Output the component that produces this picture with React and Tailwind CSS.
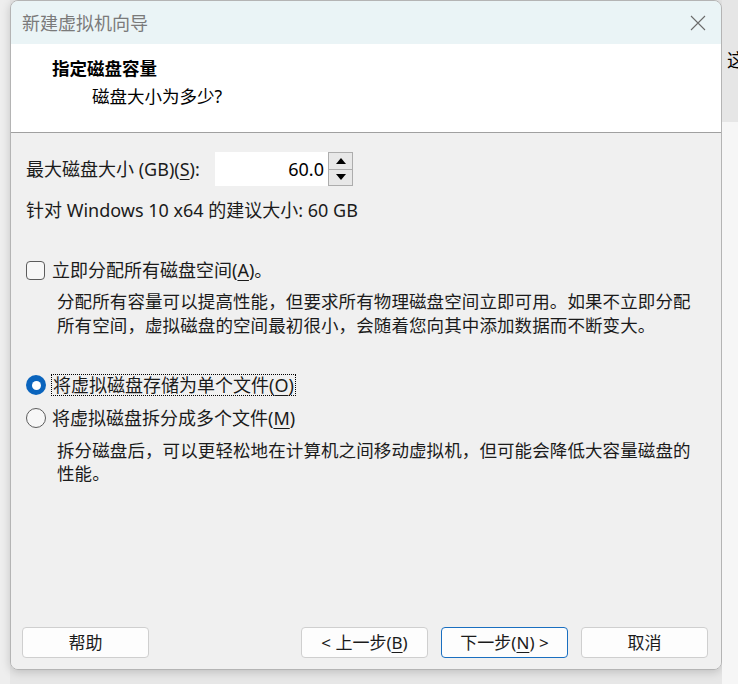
import React from "react";

function U({ children }) {
  return <span className="underline underline-offset-[3px] decoration-1">{children}</span>;
}

function Btn({ children, primary }) {
  return (
    <div
      className={
        "w-[127px] h-[31px] rounded-[4px] border flex items-center justify-center text-[17px] text-[#1b1b1b] bg-[#fdfdfd] " +
        (primary ? "border-[#1a6fc0]" : "border-[#cfcfcf]")
      }
    >
      {children}
    </div>
  );
}

export default function App() {
  return (
    <div className="w-[738px] h-[684px] overflow-hidden bg-[#e7e7e7] flex font-['Noto_Sans','Noto_Sans_CJK_SC',sans-serif] text-[#1b1b1b]">
      <div className="w-[10px] shrink-0 h-full bg-[#eeeeee]" />
      <div className="w-[712px] shrink-0 h-[670px] flex flex-col rounded-[8px] border border-[#b4b4b4] overflow-hidden shadow-[0_2px_10px_rgba(0,0,0,0.18)]">
        {/* Title bar */}
        <div className="h-[43px] shrink-0 bg-[#eaf4f6] flex items-center justify-between pl-[11px] pr-[14px]">
          <span className="text-[18px] text-[#7a7a7a] leading-none">新建虚拟机向导</span>
          <svg width="16" height="16" viewBox="0 0 16 16" className="mr-[1px]">
            <path d="M1 1 L15 15 M15 1 L1 15" stroke="#6b6b6b" strokeWidth="1.1" fill="none" />
          </svg>
        </div>
        {/* Header */}
        <div className="h-[89px] shrink-0 bg-white border-b border-[#a0a0a0] pt-[12px]">
          <div className="pl-[41px] text-[17.5px] font-bold leading-[24px] text-black">指定磁盘容量</div>
          <div className="pl-[81px] mt-[4px] text-[17.5px] leading-[24px] text-black">磁盘大小为多少?</div>
        </div>
        {/* Body */}
        <div className="flex-1 bg-[#f0f0f0] flex flex-col">
          <div className="pl-[15px] pr-[14px]">
            <div className="flex items-center mt-[19px] h-[34px]">
              <span className="text-[18px] leading-[24px] w-[189px]">
                最大磁盘大小 (GB)(<U>S</U>):
              </span>
              <div className="flex h-[34px]">
                <div className="w-[113px] h-full bg-white flex items-center justify-end pr-[4px] text-[18px] text-black">
                  60.0
                </div>
                <div className="w-[25px] h-full border border-[#adadad] bg-[#e8e8e8] flex flex-col">
                  <div className="flex-1 flex items-center justify-center border-b border-[#adadad]">
                    <svg width="10" height="6" viewBox="0 0 10 6"><path d="M5 0 L10 6 L0 6 Z" fill="#000" /></svg>
                  </div>
                  <div className="flex-1 flex items-center justify-center">
                    <svg width="10" height="6" viewBox="0 0 10 6"><path d="M0 0 L10 0 L5 6 Z" fill="#000" /></svg>
                  </div>
                </div>
              </div>
            </div>
            <div className="mt-[12px] text-[18px] leading-[24px]">针对 Windows 10 x64 的建议大小: 60 GB</div>

            <div className="mt-[36px] flex items-center h-[24px]">
              <div className="w-[19px] h-[19px] rounded-[4px] border border-[#5c5c5c] bg-[#f7f7f7]" />
              <span className="ml-[7px] text-[18px] leading-[24px]">
                立即分配所有磁盘空间(<U>A</U>)。
              </span>
            </div>
            <div className="mt-[7px] pl-[31px] text-[17.5px] leading-[24px] tracking-[0.1px]">
              分配所有容量可以提高性能，但要求所有物理磁盘空间立即可用。如果不立即分配
              <br />
              所有空间，虚拟磁盘的空间最初很小，会随着您向其中添加数据而不断变大。
            </div>

            <div className="mt-[36px] flex items-center h-[24px]">
              <div className="w-[20px] h-[20px] rounded-full bg-[#0a64bd] flex items-center justify-center">
                <div className="w-[9px] h-[9px] rounded-full bg-white" />
              </div>
              <span className="ml-[5px] text-[18px] leading-[20px] border border-dotted border-black px-[1px]">
                将虚拟磁盘存储为单个文件(<U>O</U>)
              </span>
            </div>
            <div className="mt-[9px] flex items-center h-[24px]">
              <div className="w-[20px] h-[20px] rounded-full border border-[#5c5c5c] bg-[#f7f7f7]" />
              <span className="ml-[6px] text-[18px] leading-[24px]">
                将虚拟磁盘拆分成多个文件(<U>M</U>)
              </span>
            </div>
            <div className="mt-[9px] pl-[31px] text-[17.5px] leading-[23px] tracking-[0.1px]">
              拆分磁盘后，可以更轻松地在计算机之间移动虚拟机，但可能会降低大容量磁盘的
              <br />
              性能。
            </div>
          </div>

          <div className="mt-auto mb-[11px] pl-[11px] pr-[13px] flex items-center">
            <Btn>帮助</Btn>
            <div className="ml-auto flex gap-[13px]">
              <Btn>&lt; 上一步(<U>B</U>)</Btn>
              <Btn primary>下一步(<U>N</U>) &gt;</Btn>
              <Btn>取消</Btn>
            </div>
          </div>
        </div>
      </div>
      <div className="flex-1 min-w-0 flex flex-col">
        <div className="h-[122px] bg-[#e6e6e6] pt-[48px] pl-[5px] overflow-hidden whitespace-nowrap text-[18px] leading-[24px] text-black">这</div>
        <div className="flex-1 bg-[#f6f6f6]" />
      </div>
    </div>
  );
}
